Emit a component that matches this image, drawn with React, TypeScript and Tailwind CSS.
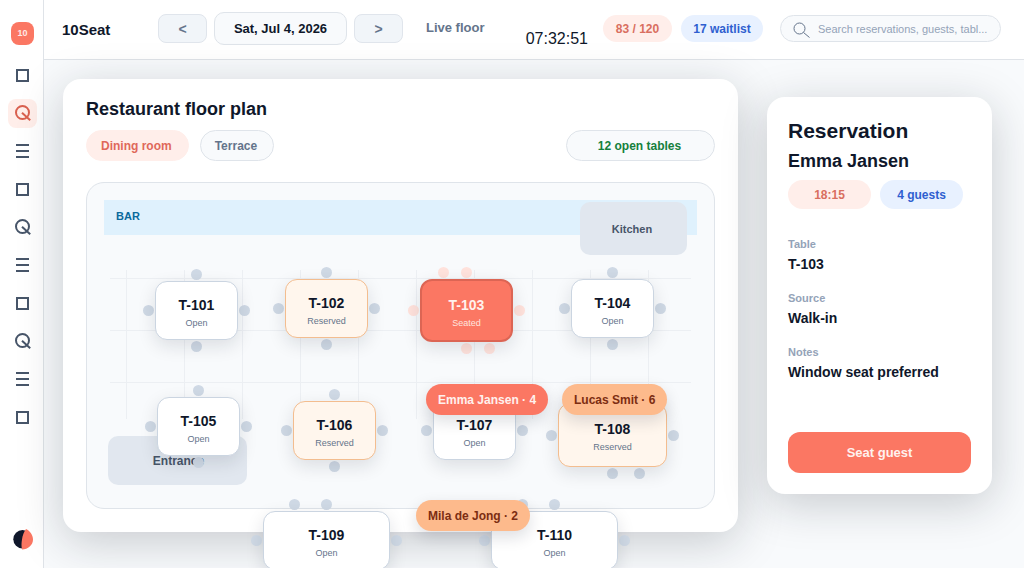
import { useState } from "react";
import clsx from "clsx";

type Status = "Open" | "Reserved" | "Seated";
type Side = "top" | "right" | "bottom" | "left";

interface Chair {
  side: Side;
  at: number;
}

interface FloorTable {
  id: string;
  x: number;
  y: number;
  w: number;
  h: number;
  status: Status;
  chairs: Chair[];
}

const CHAIR = 11;

const three: Chair[] = [
  { side: "top", at: 0.5 },
  { side: "right", at: 0.5 },
  { side: "left", at: 0.5 },
];

const four: Chair[] = [...three, { side: "bottom", at: 0.5 }];

const six: Chair[] = [
  { side: "top", at: 0.25 },
  { side: "top", at: 0.5 },
  { side: "right", at: 0.5 },
  { side: "bottom", at: 0.5 },
  { side: "bottom", at: 0.75 },
  { side: "left", at: 0.5 },
];

// positions are in floor coordinates
const tables: FloorTable[] = [
  { id: "T-101", x: 68, y: 98, w: 83, h: 59, status: "Open", chairs: four },
  { id: "T-102", x: 198, y: 96, w: 83, h: 59, status: "Reserved", chairs: four },
  { id: "T-103", x: 333, y: 96, w: 93, h: 63, status: "Seated", chairs: six },
  { id: "T-104", x: 484, y: 96, w: 83, h: 59, status: "Open", chairs: four },
  { id: "T-105", x: 70, y: 214, w: 83, h: 59, status: "Open", chairs: four },
  { id: "T-106", x: 206, y: 218, w: 83, h: 59, status: "Reserved", chairs: four },
  { id: "T-107", x: 346, y: 218, w: 83, h: 59, status: "Open", chairs: three },
  { id: "T-108", x: 471, y: 220, w: 109, h: 64, status: "Reserved", chairs: six },
  { id: "T-109", x: 176, y: 328, w: 127, h: 59, status: "Open", chairs: six },
  { id: "T-110", x: 404, y: 328, w: 127, h: 59, status: "Open", chairs: six },
];

const guests = [
  { name: "Emma Jansen", size: 4, x: 339, y: 201, seated: true },
  { name: "Lucas Smit", size: 6, x: 475, y: 201, seated: false },
  { name: "Mila de Jong", size: 2, x: 329, y: 317, seated: false },
];

const navs = [
  { title: "Overview", icon: "square" },
  { title: "Floor", icon: "search" },
  { title: "Bookings", icon: "list" },
  { title: "Guests", icon: "square" },
  { title: "Find", icon: "search" },
  { title: "Waitlist", icon: "list" },
  { title: "Menu", icon: "square" },
  { title: "Reports", icon: "search" },
  { title: "Staff", icon: "list" },
  { title: "Settings", icon: "square" },
];

const details = [
  { label: "Table", value: "T-103" },
  { label: "Source", value: "Walk-in" },
  { label: "Notes", value: "Window seat preferred" },
];

const NavIcon = ({ name }: { name: string }) => (
  <svg
    width="17"
    height="17"
    viewBox="0 0 17 17"
    fill="none"
    stroke="currentColor"
    strokeWidth="2"
    aria-hidden="true"
  >
    {name === "square" && <path d="M3 3h11v11H3z" />}
    {name === "search" && (
      <>
        <circle cx="8.5" cy="7.5" r="6.5" />
        <path d="M8 7.7l8.2 7.5" />
      </>
    )}
    {name === "list" && <path d="M2 2h13M2 8h13M2 14h13" />}
  </svg>
);

const Sidebar = () => (
  <aside className="flex w-11 shrink-0 flex-col items-center border-r border-[#dfe3e8] bg-white pt-[22px] pb-[18px] pl-0.5">
    <a
      href="#home"
      className="flex size-[23px] items-center justify-center rounded-lg bg-[#fb7763] text-[9px] font-bold text-[#ffe9e5]"
    >
      10
    </a>
    <nav className="mt-4 flex flex-col gap-[9px]">
      {navs.map((nav, i) => (
        <button
          key={nav.title}
          aria-label={nav.title}
          className={clsx(
            "flex size-[29px] items-center justify-center rounded-lg",
            i === 1 ? "bg-[#ffeeea] text-[#d9604f]" : "text-[#475569]",
          )}
        >
          <NavIcon name={nav.icon} />
        </button>
      ))}
    </nav>
    <button aria-label="Toggle theme" className="mt-auto">
      <svg width="21" height="21" viewBox="0 0 21 21" aria-hidden="true">
        <circle cx="10.5" cy="10.2" r="9.2" fill="#0f172a" />
        <path
          d="M14 0C18 2 21 6 21 10.5C21 16 16 20.5 10 20.5C9.2 17 9.5 13 10 10.5C10.5 6.5 12 2.5 14 0Z"
          fill="#fb7763"
        />
      </svg>
    </button>
  </aside>
);

const Header = () => (
  <header className="flex h-[60px] shrink-0 items-center border-b border-[#dfe3e8] bg-white pr-[23px] pb-0.5 pl-[18px]">
    <span className="w-24 pt-1 text-[15px] font-bold">10Seat</span>
    <div className="flex items-center gap-[7px]">
      <button
        aria-label="Previous day"
        className="h-[29px] w-[49px] rounded-lg border border-[#e0e5ec] bg-[#f1f5f9] text-sm leading-none font-bold text-[#64748b]"
      >
        &lt;
      </button>
      <button className="h-[33px] w-[133px] rounded-[10px] border border-[#dfe4ea] bg-[#f8fafc] text-[13px] font-bold">
        Sat, Jul 4, 2026
      </button>
      <button
        aria-label="Next day"
        className="h-[29px] w-[49px] rounded-lg border border-[#e0e5ec] bg-[#f1f5f9] text-sm leading-none font-bold text-[#64748b]"
      >
        &gt;
      </button>
    </div>
    <span className="ml-[23px] pb-0.5 text-[13px] font-bold text-[#64748b]">
      Live floor
    </span>
    <div className="ml-auto flex items-center">
      <time className="mt-5 mr-[15px] text-base">07:32:51</time>
      <span className="mr-[9px] flex h-[27px] w-[69px] items-center justify-center rounded-full bg-[#ffeeea] text-xs font-bold text-[#d96f60]">
        83 / 120
      </span>
      <span className="mr-[17px] flex h-[27px] w-[82px] items-center justify-center rounded-full bg-[#e8f1ff] text-xs font-bold text-[#2f5fd0]">
        17 waitlist
      </span>
      <label className="flex h-[27px] w-[221px] items-center gap-2 rounded-full border border-[#dfe4ea] bg-[#f8fafc] pr-2 pl-3">
        <svg
          width="17"
          height="17"
          viewBox="0 0 17 17"
          fill="none"
          stroke="#64748b"
          className="mt-1 shrink-0"
          aria-hidden="true"
        >
          <circle cx="6.5" cy="6.5" r="5.5" />
          <path d="M10.5 10.5l6 5" />
        </svg>
        <input
          type="text"
          aria-label="Search"
          placeholder="Search reservations, guests, tabl..."
          className="w-full min-w-0 bg-transparent pt-0.5 text-[11px] outline-none placeholder:text-[#94a3b8]"
        />
      </label>
    </div>
  </header>
);

const chairPosition = (chair: Chair, w: number, h: number) => {
  const along = (length: number) => Math.round(length * chair.at - CHAIR / 2);
  switch (chair.side) {
    case "top":
      return { left: along(w), top: -CHAIR - 1 };
    case "bottom":
      return { left: along(w), top: h + 1 };
    case "left":
      return { left: -CHAIR - 1, top: along(h) };
    case "right":
      return { left: w + 1, top: along(h) };
  }
};

const TableNode = ({ table }: { table: FloorTable }) => {
  const { id, x, y, w, h, status, chairs } = table;

  return (
    <div className="absolute" style={{ left: x, top: y, width: w, height: h }}>
      {chairs.map((chair, i) => (
        <span
          key={i}
          className={clsx(
            "absolute size-[11px] rounded-full",
            status === "Seated" ? "bg-[#ffe2dc]" : "bg-[#cfd9e5]",
          )}
          style={chairPosition(chair, w, h)}
        />
      ))}
      <button
        className={clsx(
          "relative flex size-full flex-col items-center justify-center rounded-xl pt-1 shadow-[0_6px_18px_rgba(15,23,42,0.12)]",
          status === "Open" && "border border-[#cbd5e1] bg-white",
          status === "Reserved" && "border border-[#f3bd8f] bg-[#fff6ed]",
          status === "Seated" && "border-2 border-[#dc6554] bg-[#fb7763] text-[#fff1ee]",
        )}
      >
        <span className="text-sm leading-5 font-bold">{id}</span>
        <span
          className={clsx(
            "text-[9px] leading-4",
            status === "Seated" ? "text-[#ffe4df]" : "text-[#64748b]",
          )}
        >
          {status}
        </span>
      </button>
    </div>
  );
};

const FloorPlan = () => {
  const [room, setRoom] = useState("Dining room");

  return (
    <section className="flex min-w-0 flex-1 flex-col rounded-[18px] bg-white px-[23px] pt-[18px] pb-[23px] shadow-[0_10px_46px_rgba(20,26,36,0.21)]">
      <h1 className="text-lg leading-6 font-bold">Restaurant floor plan</h1>
      <div className="mt-[9px] flex gap-[11px]">
        {["Dining room", "Terrace"].map((name) => (
          <button
            key={name}
            onClick={() => setRoom(name)}
            className={clsx(
              "h-[31px] rounded-full border pr-4 pl-3.5 text-xs font-bold whitespace-nowrap",
              room === name
                ? "border-[#ffeeea] bg-[#ffeeea] text-[#e0685a]"
                : "border-[#dfe4ea] bg-[#f8fafc] text-[#64748b]",
            )}
          >
            {name}
          </button>
        ))}
        <span className="ml-auto flex h-[31px] w-[149px] items-center justify-center rounded-full border border-[#dfe4ea] bg-[#f8fafc] pr-0.5 text-xs font-bold text-[#15803d]">
          12 open tables
        </span>
      </div>

      <div className="relative mt-[21px] h-[327px] rounded-[18px] border border-[#dfe4ea] bg-[#f8fafc]">
        <div className="absolute inset-x-[17px] top-[17px] flex h-[35px] items-center bg-[#dff1fd] px-3 pb-0.5 text-[11px] font-bold text-[#0b6a9c]">
          BAR
        </div>
        <div className="absolute top-[87px] left-[23px] h-[149px] w-[581px] bg-[linear-gradient(to_right,#eceff3_1px,transparent_1px),linear-gradient(to_bottom,#eceff3_1px,transparent_1px)] bg-[size:58px_52px] bg-[position:16px_8px]" />
        <div className="absolute top-[19px] left-[493px] flex h-[53px] w-[107px] items-center justify-center rounded-[10px] bg-[#e1e7ef] pt-0.5 pr-[3px] text-[11px] font-bold text-[#475569]">
          Kitchen
        </div>
        <div className="absolute top-[253px] left-[21px] flex h-[49px] w-[139px] items-center justify-center rounded-[10px] bg-[#e1e7ef] pl-0.5 text-xs font-bold text-[#475569]">
          Entrance
        </div>

        {tables.map((table) => (
          <TableNode key={table.id} table={table} />
        ))}

        {guests.map((guest) => (
          <div
            key={guest.name}
            className={clsx(
              "absolute flex h-[31px] items-center rounded-full px-3 text-xs font-bold whitespace-nowrap shadow-[0_6px_16px_rgba(15,23,42,0.14)]",
              guest.seated
                ? "bg-[#fb7763] text-[#fff1ee]"
                : "bg-[#fdba8c] text-[#7c2d12]",
            )}
            style={{ left: guest.x, top: guest.y }}
          >
            {guest.name} · {guest.size}
          </div>
        ))}
      </div>
    </section>
  );
};

const ReservationPanel = () => (
  <aside className="mt-[18px] flex min-h-[397px] w-[225px] shrink-0 flex-col rounded-[18px] bg-white px-[21px] pt-5 pb-[21px] shadow-[0_10px_46px_rgba(20,26,36,0.21)]">
    <h2 className="text-[21px] leading-7 font-bold">Reservation</h2>
    <h3 className="mt-1 text-lg leading-6 font-bold">Emma Jansen</h3>
    <div className="mt-[7px] flex gap-[9px] text-xs font-bold">
      <span className="flex h-[29px] w-[83px] items-center justify-center rounded-full bg-[#ffeeea] text-[#d96f60]">
        18:15
      </span>
      <span className="flex h-[29px] w-[83px] items-center justify-center rounded-full bg-[#e8f1ff] text-[#2f5fd0]">
        4 guests
      </span>
    </div>
    <dl className="mt-[27px] flex flex-col gap-4 font-bold">
      {details.map((item) => (
        <div key={item.label}>
          <dt className="text-[11px] leading-4 text-[#94a3b8]">{item.label}</dt>
          <dd className="mt-0.5 text-sm leading-5">{item.value}</dd>
        </div>
      ))}
    </dl>
    <button className="mt-auto h-[41px] rounded-xl bg-[#fb7763] text-[13px] font-bold text-[#fff1ee]">
      Seat guest
    </button>
  </aside>
);

const App = () => (
  <div className="flex h-screen overflow-hidden bg-[#f8fafc] font-['Liberation_Sans',Arial,sans-serif] text-[#0f172a]">
    <Sidebar />
    <div className="flex min-w-0 flex-1 flex-col">
      <Header />
      <main className="flex items-start gap-[29px] pt-[19px] pr-8 pl-[19px]">
        <FloorPlan />
        <ReservationPanel />
      </main>
    </div>
  </div>
);

export default App;
